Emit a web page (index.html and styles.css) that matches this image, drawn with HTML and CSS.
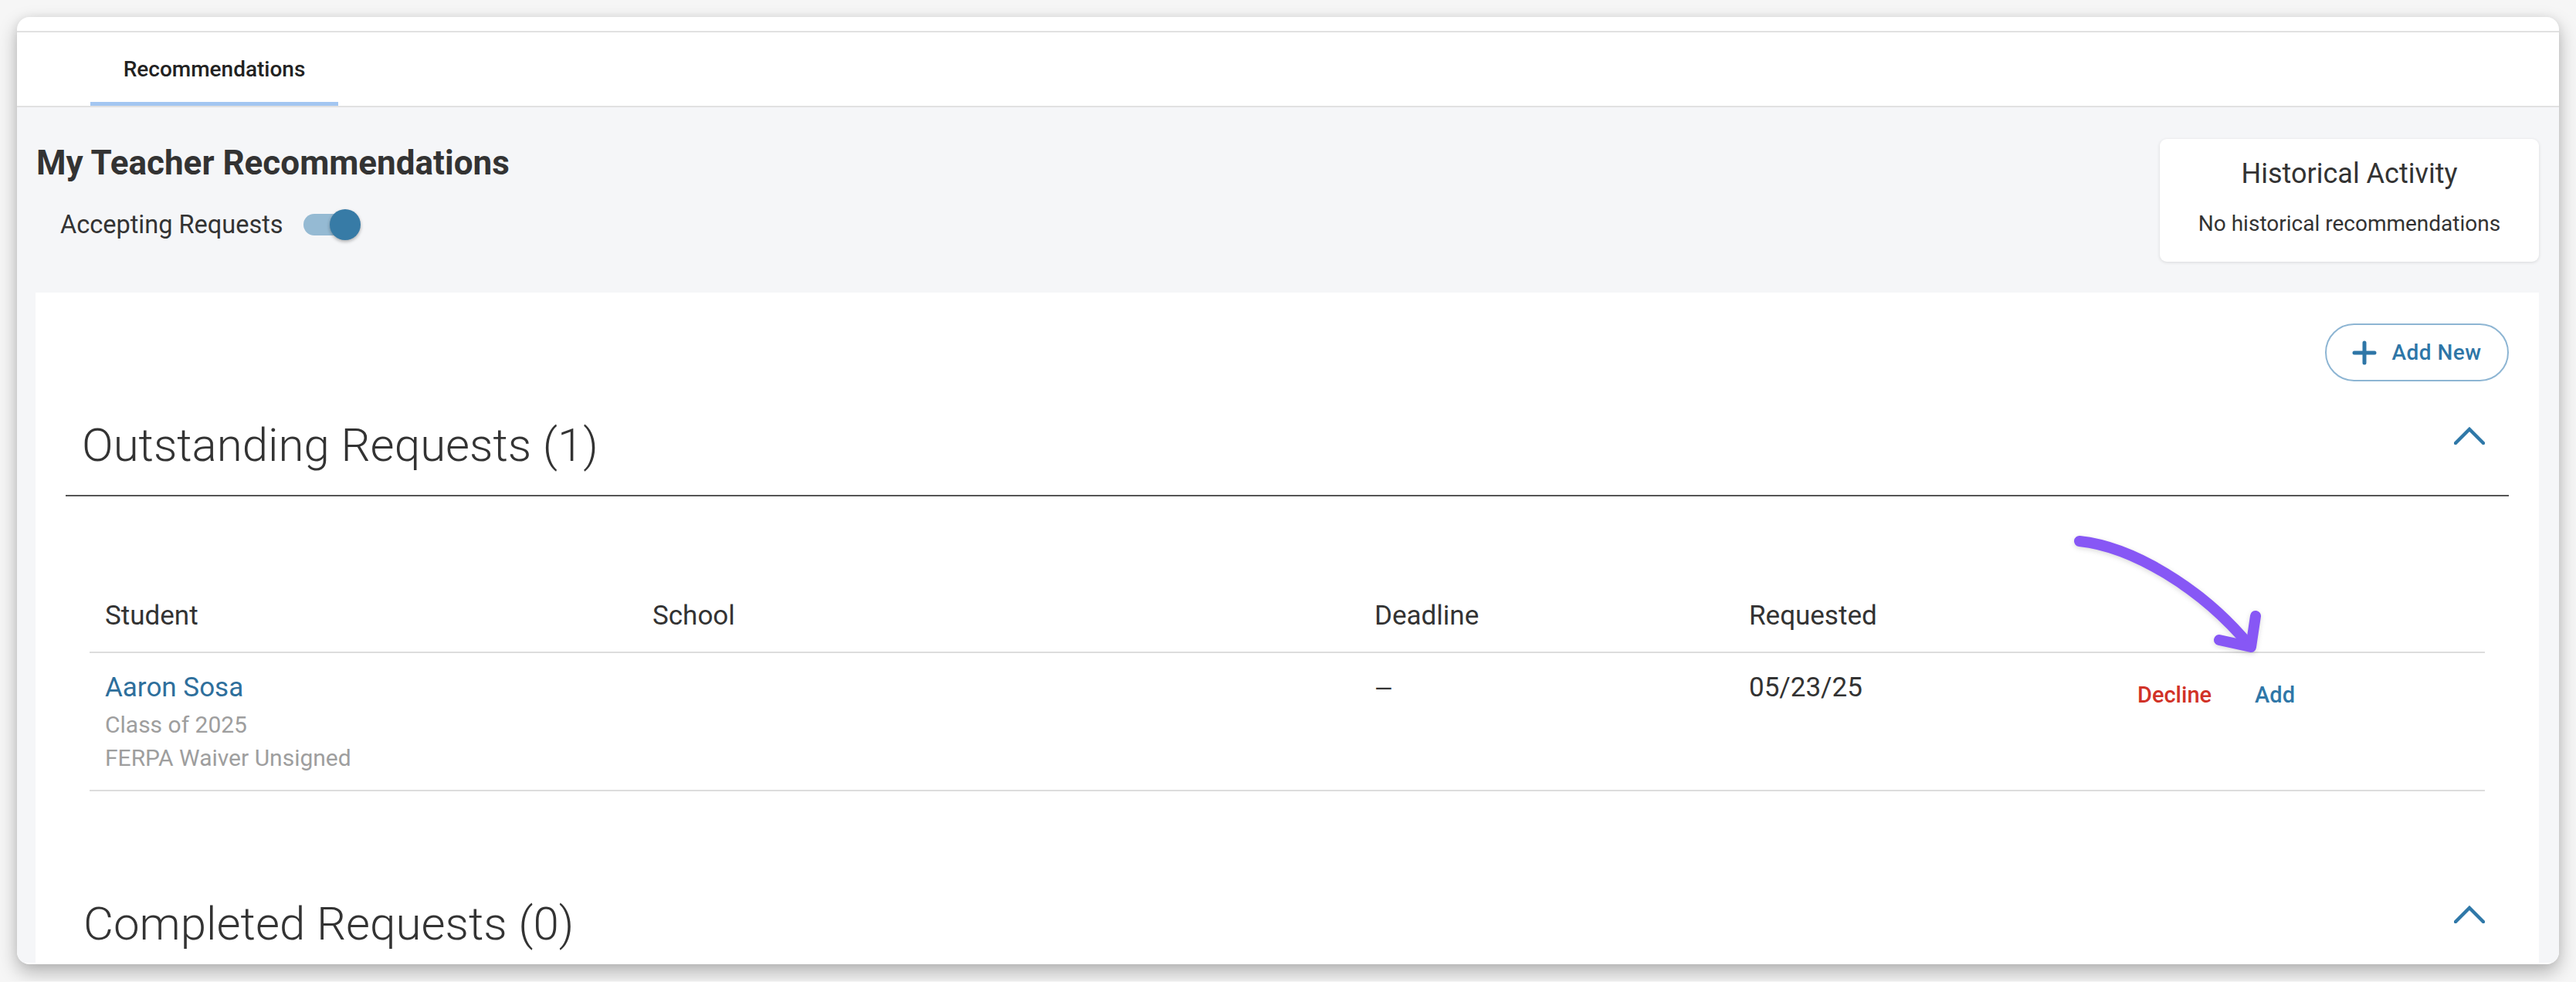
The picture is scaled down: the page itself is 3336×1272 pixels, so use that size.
FILE: index.html
```html
<!DOCTYPE html>
<html lang="en">
<head>
<meta charset="utf-8">
<title>Recommendations</title>
<link rel="stylesheet" href="styles.css">
</head>
<body>
<div class="window">
  <div class="topstrip"></div>
  <div class="tabbar">
    <div class="tab">Recommendations</div>
  </div>
  <div class="main">
    <div class="header">
      <div class="intro">
        <h1 class="title">My Teacher Recommendations</h1>
        <div class="accepting">
          <span class="accepting-label">Accepting Requests</span>
          <span class="toggle"><span class="track"></span><span class="knob"></span></span>
        </div>
      </div>
      <div class="hist">
        <div class="hist-title">Historical Activity</div>
        <div class="hist-text">No historical recommendations</div>
      </div>
    </div>
    <div class="panel">
      <div class="actions-top">
        <button class="addnew">
          <svg class="plus" width="32" height="32" viewBox="0 0 32 32"><path d="M16 3 V29 M3 16 H29" stroke="#2e76a7" stroke-width="5" stroke-linecap="round" fill="none"/></svg>
          <span>Add New</span>
        </button>
      </div>
      <div class="sec-head">
        <h2 class="sec-title">Outstanding Requests (1)</h2>
        <svg class="chev" width="40" height="23" viewBox="0 0 40 23"><polyline points="2,21 20,3 38,21" fill="none" stroke="#2f78a8" stroke-width="4.5" stroke-linecap="round" stroke-linejoin="miter"/></svg>
      </div>
      <div class="table">
        <div class="row thead">
          <div class="cell">Student</div>
          <div class="cell">School</div>
          <div class="cell">Deadline</div>
          <div class="cell">Requested</div>
          <div class="cell"></div>
        </div>
        <div class="row tbody">
          <div class="cell">
            <a class="student">Aaron Sosa</a>
            <div class="sub">Class of 2025</div>
            <div class="sub">FERPA Waiver Unsigned</div>
          </div>
          <div class="cell"></div>
          <div class="cell"><span class="dash">—</span></div>
          <div class="cell">05/23/25</div>
          <div class="cell act">
            <span class="decline">Decline</span>
            <span class="add">Add</span>
          </div>
        </div>
      </div>
      <div class="sec-head completed">
        <h2 class="sec-title">Completed Requests (0)</h2>
        <svg class="chev" width="40" height="23" viewBox="0 0 40 23"><polyline points="2,21 20,3 38,21" fill="none" stroke="#2f78a8" stroke-width="4.5" stroke-linecap="round" stroke-linejoin="miter"/></svg>
      </div>
    </div>
  </div>
  <svg class="arrow" width="320" height="230" viewBox="0 0 320 230">
    <g fill="none" stroke="#8757f5" stroke-width="14" stroke-linecap="round" stroke-linejoin="round">
      <path d="M43 41 C110 48 200 100 263 176"/>
      <path d="M271 138 L265 178 L224 169"/>
    </g>
  </svg>
</div>
</body>
</html>
```

FILE: styles.css
```css
* { box-sizing: border-box; }
html, body { margin: 0; padding: 0; }
body {
  background: #f6f6f6;
  padding: 22px;
  font-family: Roboto, "Liberation Sans", sans-serif;
  color: #333333;
}
.window {
  position: relative;
  width: 3292px;
  height: 1227px;
  background: #ffffff;
  border-radius: 16px;
  overflow: hidden;
  box-shadow: 0 10px 24px rgba(0,0,0,0.28), 0 0 12px rgba(0,0,0,0.06);
}
.topstrip {
  height: 20px;
  border-bottom: 2px solid #e1e1e1;
}
.tabbar {
  height: 97px;
  border-bottom: 2px solid #e1e1e1;
  display: flex;
}
.tab {
  margin-left: 95px;
  width: 321px;
  height: 95px;
  border-bottom: 5px solid #a3c6f1;
  display: flex;
  align-items: center;
  justify-content: center;
  padding-top: 6px;
  font-size: 28px;
  font-weight: 500;
  line-height: 1;
  color: #222;
}
.main {
  background: #f5f6f8;
  padding: 41px 26px 0 24px;
  height: 1108px;
}
.header {
  display: flex;
  justify-content: space-between;
  align-items: flex-start;
}
.intro { padding-left: 1px; padding-top: 9px; }
.title {
  margin: 0;
  font-size: 44px;
  line-height: 44px;
  font-weight: 700;
  color: #333;
}
.accepting {
  margin-top: 38px;
  padding-left: 31px;
  display: flex;
  align-items: center;
  height: 40px;
  gap: 26px;
}
.accepting-label {
  font-size: 32.5px;
  line-height: 40px;
  color: #333;
}
.toggle {
  position: relative;
  width: 74px;
  height: 40px;
  display: inline-block;
}
.track {
  position: absolute;
  left: 0; top: 6px;
  width: 66px; height: 28px;
  border-radius: 14px;
  background: #95bad3;
}
.knob {
  position: absolute;
  right: 0; top: 0;
  width: 40px; height: 40px;
  border-radius: 50%;
  background: #377ba6;
  box-shadow: 0 2px 4px rgba(0,0,0,0.3);
}
.hist {
  width: 491px;
  height: 159px;
  background: #fff;
  border-radius: 9px;
  box-shadow: 0 1px 4px rgba(0,0,0,0.12);
  text-align: center;
  padding-top: 27px;
}
.hist-title {
  font-size: 36px;
  line-height: 36px;
  color: #333;
}
.hist-text {
  margin-top: 33px;
  font-size: 28px;
  line-height: 28px;
  color: #333;
}
.panel {
  margin-top: 40px;
  background: #ffffff;
  padding: 40px 39px 0 39px;
  height: 900px;
}
.actions-top {
  display: flex;
  justify-content: flex-end;
}
.addnew {
  width: 238px;
  height: 75px;
  border: 2px solid #8db5d3;
  border-radius: 38px;
  background: #fff;
  display: flex;
  align-items: center;
  justify-content: center;
  gap: 19px;
  font-family: Roboto, "Liberation Sans", sans-serif;
  font-size: 28px;
  font-weight: 500;
  letter-spacing: 0.5px;
  color: #2e76a7;
  padding: 0;
}
.plus { display: block; }
.sec-head {
  margin-top: 53px;
  display: flex;
  justify-content: space-between;
  align-items: flex-start;
  padding: 0 31px 34px 21px;
  border-bottom: 2px solid #555555;
}
.sec-title {
  margin: 0;
  font-size: 60px;
  line-height: 60px;
  font-weight: 300;
  color: #333;
}
.chev { display: block; margin-top: 6px; }
.sec-head.completed {
  margin-top: 142px;
  border-bottom: none;
  padding-left: 23px;
}
.table {
  margin: 137px 31px 0 31px;
}
.row {
  display: grid;
  grid-template-columns: 709px 935px 485px 503px 1fr;
  border-bottom: 2px solid #dddddd;
}
.cell {
  padding: 0 20px;
  font-size: 35px;
  line-height: 35px;
  color: #333;
}
.dash { font-size: 30px; }
.thead { padding-bottom: 29px; }
.tbody { padding-top: 27px; padding-bottom: 20px; }
.student {
  display: block;
  color: #2e6f9c;
  font-size: 35px;
  line-height: 35px;
}
.sub {
  font-size: 30px;
  line-height: 43px;
  color: #9e9e9e;
}
.student + .sub { margin-top: 9px; }
.act {
  padding-top: 13px;
  font-size: 29px;
  line-height: 29px;
  font-weight: 500;
  display: flex;
  gap: 56px;
  align-items: flex-start;
}
.decline { color: #d13227; }
.add { color: #2f77a8; }
.arrow {
  position: absolute;
  left: 2628px;
  top: 638px;
  filter: drop-shadow(0 2px 3px rgba(0,0,0,0.15));
}
```
